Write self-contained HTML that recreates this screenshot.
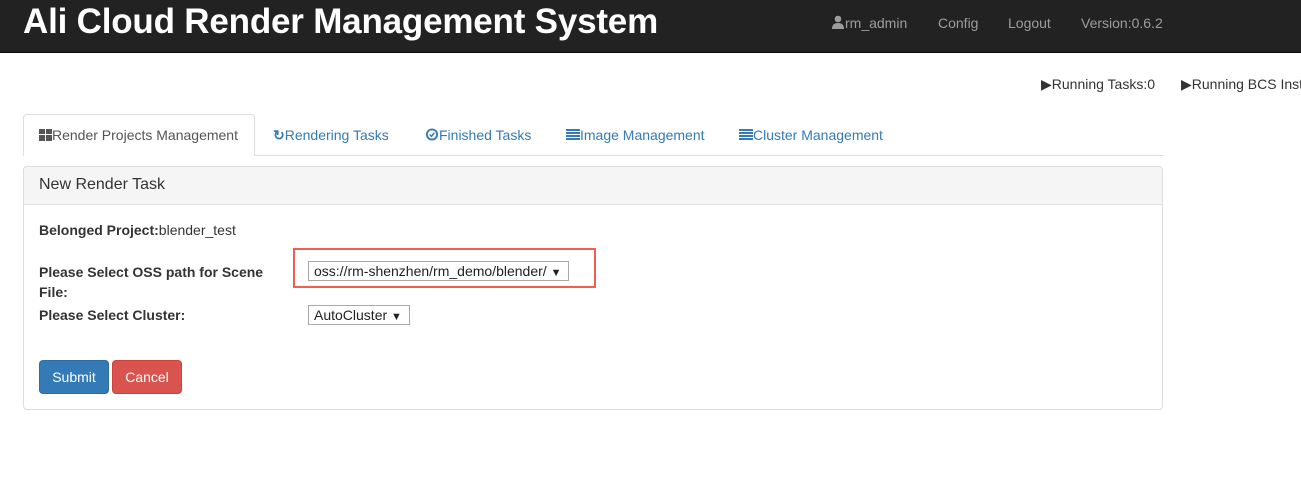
<!DOCTYPE html>
<html><head><style>
*{box-sizing:border-box;margin:0;padding:0}
body{width:1301px;height:482px;background:#fff;font-family:"Liberation Sans",sans-serif;font-size:14px;color:#333;position:relative;overflow:hidden}
.a{position:absolute;white-space:nowrap}
.nav{position:absolute;left:0;top:0;width:1301px;height:53px;background:#222;border-bottom:1px solid #080808}
.nl{color:#9d9d9d;top:15px;font-size:14px}
.tab{color:#337ab7;top:127px}
.sel{position:absolute;border:1px solid #a9a9a9;background:#fff;font-size:14px;color:#222;padding:1px 5px;height:20px;line-height:16px}
.btn{position:absolute;top:360px;height:34px;border-radius:4px;color:#fff;font-size:14px;line-height:32px;text-align:center}
</style></head><body>
<div class="nav"></div>
<div class="a" style="left:23px;top:2px;font-size:35px;font-weight:bold;color:#fff;line-height:40px;letter-spacing:-0.2px">Ali Cloud Render Management System</div>
<div class="a nl" style="left:831px"><svg width="14" height="14" viewBox="0 0 14 14" style="vertical-align:-1px"><circle cx="7" cy="4" r="3.3" fill="#9d9d9d"/><path d="M1 14 Q1 8 7 8 Q13 8 13 14Z" fill="#9d9d9d"/></svg>rm_admin</div>
<div class="a nl" style="left:938px">Config</div>
<div class="a nl" style="left:1008px">Logout</div>
<div class="a nl" style="left:1081px">Version:0.6.2</div>
<div class="a" style="left:1041px;top:76px">▶Running Tasks:0</div>
<div class="a" style="left:1181px;top:76px">▶Running BCS Instances</div>
<div class="a" style="left:23px;top:155px;width:1140px;height:1px;background:#ddd"></div>
<div class="a" style="left:23px;top:114px;width:232px;height:42px;border:1px solid #ddd;border-bottom-color:#fff;border-radius:4px 4px 0 0;background:#fff"></div>
<div class="a" style="left:39px;top:127px;color:#555"><span style="display:inline-block;width:13px;height:12px;vertical-align:-1px;background:linear-gradient(#555,#555) 0 0/6px 5px no-repeat,linear-gradient(#555,#555) 7px 0/6px 5px no-repeat,linear-gradient(#555,#555) 0 6px/6px 6px no-repeat,linear-gradient(#555,#555) 7px 6px/6px 6px no-repeat"></span>Render Projects Management</div>
<div class="a tab" style="left:273px"><b>↻</b>Rendering Tasks</div>
<div class="a tab" style="left:425px"><svg width="14" height="13" viewBox="0 0 14 14" style="vertical-align:-1px"><circle cx="7" cy="7" r="5.5" fill="none" stroke="#337ab7" stroke-width="2"/><path d="M4.5 7l2 2 3-4" fill="none" stroke="#337ab7" stroke-width="1.6"/></svg>Finished Tasks</div>
<div class="a tab" style="left:566px"><span style="display:inline-block;width:14px;height:11px;background:repeating-linear-gradient(#337ab7 0 2px,transparent 2px 3px)"></span>Image Management</div>
<div class="a tab" style="left:739px"><span style="display:inline-block;width:14px;height:11px;background:repeating-linear-gradient(#337ab7 0 2px,transparent 2px 3px)"></span>Cluster Management</div>
<div class="a" style="left:23px;top:166px;width:1140px;height:244px;border:1px solid #ddd;border-radius:4px"></div>
<div class="a" style="left:24px;top:167px;width:1138px;height:38px;background:#f5f5f5;border-bottom:1px solid #ddd;border-radius:3px 3px 0 0"></div>
<div class="a" style="left:39px;top:176px;font-size:16px">New Render Task</div>
<div class="a" style="left:39px;top:222px"><b>Belonged Project:</b>blender_test</div>
<div class="a" style="left:39px;top:262px;font-weight:bold;line-height:20px">Please Select OSS path for Scene<br>File:</div>
<div class="a" style="left:39px;top:307px;font-weight:bold">Please Select Cluster:</div>
<div class="a" style="left:293px;top:248px;width:303px;height:40px;border:2px solid #f06050"></div>
<div class="sel" style="left:308px;top:261px;width:261px">oss://rm-shenzhen/rm_demo/blender/ <span style="font-size:11px">▼</span></div>
<div class="sel" style="left:308px;top:305px;width:102px">AutoCluster <span style="font-size:11px">▼</span></div>
<div class="btn" style="left:39px;width:70px;background:#337ab7;border:1px solid #2e6da4">Submit</div>
<div class="btn" style="left:112px;width:70px;background:#d9534f;border:1px solid #d43f3a">Cancel</div>
</body></html>
